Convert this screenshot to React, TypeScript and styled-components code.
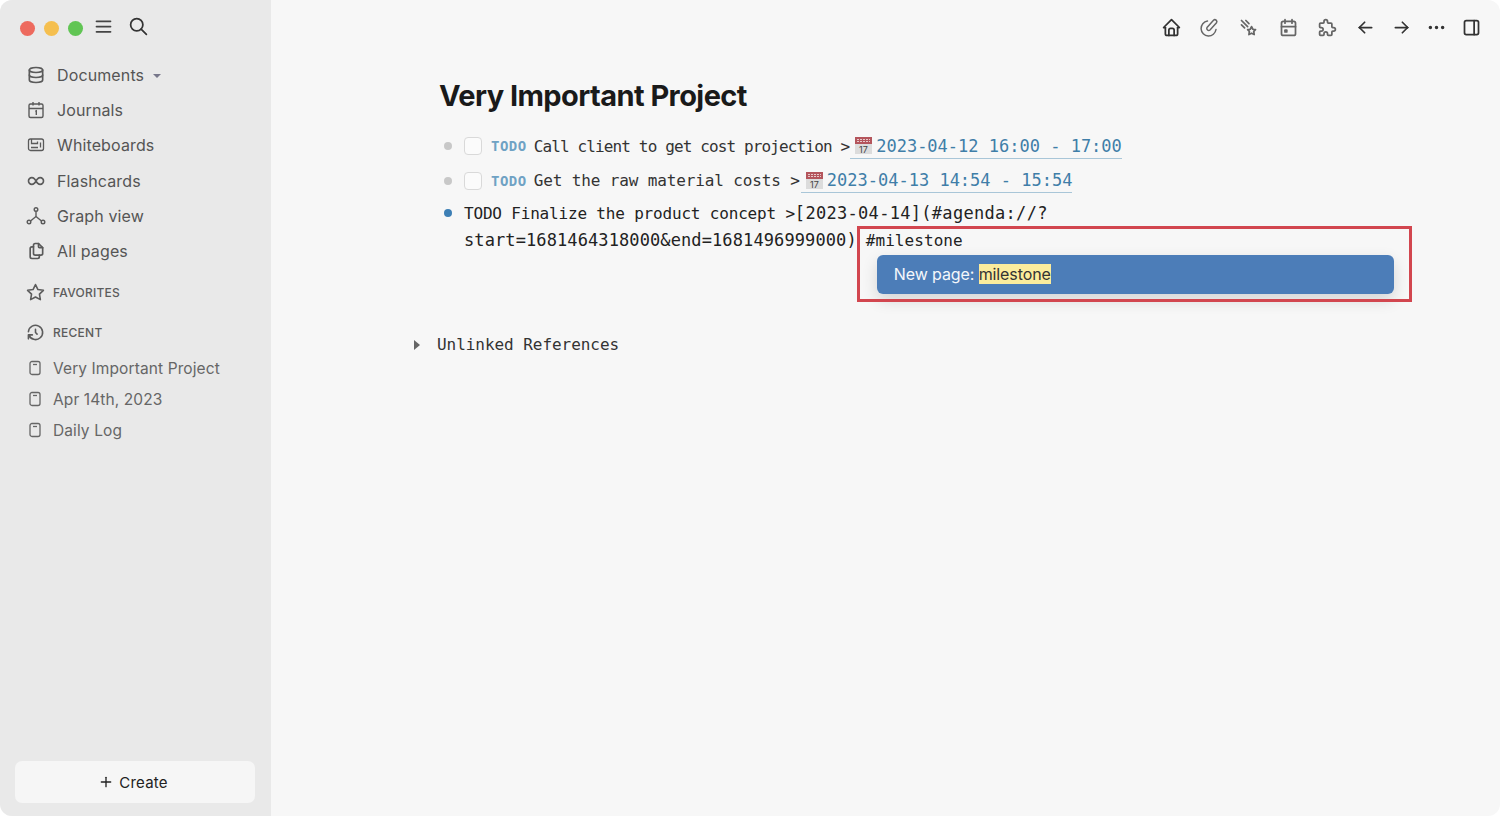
import React from "react";
import styled, { createGlobalStyle } from "styled-components";
import {
  TbDatabase,
  TbInfinity,
  TbFiles,
  TbStar,
  TbHistory,
  TbHome,
  TbComet,
  TbCalendarEvent,
  TbPuzzle,
  TbArrowLeft,
  TbArrowRight,
  TbDots,
  TbLayoutSidebarRight,
  TbMenu2,
  TbSearch,
  TbPlus,
} from "react-icons/tb";

const monoFont = `"DejaVu Sans Mono", "Liberation Mono", monospace`;
const uiFont = `Inter, "Liberation Sans", sans-serif`;

const GraphIcon = () => (
  <svg width="20" height="20" viewBox="0 0 20 20" fill="none" stroke="currentColor" strokeWidth="1.4">
    <circle cx="10" cy="3.5" r="1.8" />
    <circle cx="3" cy="16" r="1.8" />
    <circle cx="17" cy="16" r="1.8" />
    <path d="M10 5.3V10.5M10 10.5L4.5 15M10 10.5L15.5 15" />
  </svg>
);

const PageIcon = () => (
  <svg width="14" height="16" viewBox="0 0 14 16" fill="none" stroke="currentColor" strokeWidth="1.3">
    <rect x="2" y="1.5" width="10" height="13" rx="2" />
    <path d="M5 4.5H9" />
  </svg>
);

const JournalIcon = () => (
  <svg width="20" height="20" viewBox="0 0 20 20" fill="none" stroke="currentColor" strokeWidth="1.4">
    <rect x="3" y="4" width="14" height="13.5" rx="1.5" />
    <path d="M3 8.5H17M7 2V5.5M13 2V5.5M9.3 11.5L10.3 11V15" />
  </svg>
);

const BoardIcon = () => (
  <svg width="18" height="18" viewBox="0 0 18 18" fill="none" stroke="currentColor" strokeWidth="1.3">
    <rect x="1.5" y="3" width="15" height="11.5" rx="2" />
    <path d="M4.5 3V7.5H10.5V5.5M4 11.5H11M13.5 6.5V11.5" />
  </svg>
);

const ClipIcon = () => (
  <svg width="21" height="21" viewBox="0 0 21 21" fill="none" stroke="currentColor" strokeWidth="1.5" strokeLinecap="round">
    <path d="M8.5 4A7.5 7.5 0 1 0 17 12.5" />
    <path d="M8 10.5L14.5 3.2a2 2 0 0 1 3 2.6L11 13a2 2 0 0 1-3-2.5z" />
  </svg>
);

const CalendarEmoji = () => (
  <CalendarSvg width="19" height="19" viewBox="0 0 19 19">
    <rect x="1" y="1" width="17" height="17" fill="#dcdcdc" />
    <rect x="1" y="1" width="17" height="7" fill="#b4555c" />
    <path d="M3 3.5H16M3 5.5H16" stroke="#e7c9cb" strokeWidth="1" strokeDasharray="2 1" />
    <text x="9.5" y="16.5" fontSize="9" textAnchor="middle" fill="#444" fontFamily="Inter, sans-serif">
      17
    </text>
  </CalendarSvg>
);

const navItems = [
  { label: "Journals", icon: <JournalIcon /> },
  { label: "Whiteboards", icon: <BoardIcon /> },
  { label: "Flashcards", icon: <TbInfinity size={20} /> },
  { label: "Graph view", icon: <GraphIcon /> },
  { label: "All pages", icon: <TbFiles size={20} /> },
];

const recentPages = ["Very Important Project", "Apr 14th, 2023", "Daily Log"];

const App = () => {
  return (
    <>
      <GlobalStyle />
      <Window>
        <Sidebar>
          <SideTop>
            <Light color="#ed6a5e" />
            <Light color="#f5bf4f" />
            <Light color="#61c554" />
            <MenuIcon>
              <TbMenu2 size={21} />
            </MenuIcon>
            <SearchIcon>
              <TbSearch size={21} />
            </SearchIcon>
          </SideTop>
          <Nav>
            <NavItem>
              <NavIcon>
                <TbDatabase size={20} />
              </NavIcon>
              Documents
              <Caret />
            </NavItem>
            {navItems.map((item) => (
              <NavItem key={item.label}>
                <NavIcon>{item.icon}</NavIcon>
                {item.label}
              </NavItem>
            ))}
          </Nav>
          <SectionHead $top={14}>
            <TbStar size={19} />
            FAVORITES
          </SectionHead>
          <SectionHead $top={20}>
            <TbHistory size={19} />
            RECENT
          </SectionHead>
          <RecentList>
            {recentPages.map((page) => (
              <RecentItem key={page}>
                <PageIcon />
                {page}
              </RecentItem>
            ))}
          </RecentList>
          <CreateButton>
            <TbPlus size={16} />
            Create
          </CreateButton>
        </Sidebar>
        <Main>
          <TopBar>
            <TopIcon $gap={0} $dark>
              <TbHome size={21} />
            </TopIcon>
            <TopIcon $gap={14}>
              <ClipIcon />
            </TopIcon>
            <TopIcon $gap={15}>
              <TbComet size={21} />
            </TopIcon>
            <TopIcon $gap={16}>
              <TbCalendarEvent size={21} />
            </TopIcon>
            <TopIcon $gap={15}>
              <TbPuzzle size={21} />
            </TopIcon>
            <TopIcon $gap={14} $dark>
              <TbArrowLeft size={21} />
            </TopIcon>
            <TopIcon $gap={12} $dark>
              <TbArrowRight size={21} />
            </TopIcon>
            <TopIcon $gap={11} $dark>
              <TbDots size={21} />
            </TopIcon>
            <TopIcon $gap={11} $dark>
              <TbLayoutSidebarRight size={21} />
            </TopIcon>
          </TopBar>
          <Content>
            <Title>Very Important Project</Title>
            <Row>
              <Bullet />
              <Check />
              <Todo>TODO</Todo>
              <RowText $spacing={-0.87}>Call client to get cost projection &gt;</RowText>
              <DateLink>
                <CalendarEmoji />
                2023-04-12 16:00 - 17:00
              </DateLink>
            </Row>
            <Row>
              <Bullet />
              <Check />
              <Todo>TODO</Todo>
              <RowText $spacing={-0.13}>Get the raw material costs &gt;</RowText>
              <DateLink>
                <CalendarEmoji />
                2023-04-13 14:54 - 15:54
              </DateLink>
            </Row>
            <EditBlock>
              <Bullet $active />
              <EditText>
                <EditLine $spacing={0.3}>
                  <RowText $spacing={-0.18}>TODO Finalize the product concept &gt;</RowText>
                  [2023-04-14](#agenda://?
                </EditLine>
                <EditLine $spacing={0.1}>
                  start=1681464318000&amp;end=1681496999000)
                  <Tag>
                    <RowText $spacing={0.07}>#milestone</RowText>
                    <Popup>
                      <PopupItem>
                        New page: <Mark>milestone</Mark>
                      </PopupItem>
                    </Popup>
                    <Annotation />
                  </Tag>
                </EditLine>
              </EditText>
            </EditBlock>
            <Unlinked>
              <Arrow />
              Unlinked References
            </Unlinked>
          </Content>
        </Main>
      </Window>
    </>
  );
};

export default App;

const GlobalStyle = createGlobalStyle`
  html, body {
    margin: 0;
    padding: 0;
    background: #ffffff;
  }
`;

const Window = styled.div`
  display: flex;
  width: 1500px;
  height: 816px;
  border-radius: 12px;
  overflow: hidden;
  font-family: ${uiFont};
  background: #f7f7f7;
`;

const Sidebar = styled.aside`
  display: flex;
  flex-direction: column;
  width: 271px;
  flex-shrink: 0;
  box-sizing: border-box;
  padding: 0 16px 13px 15px;
  background: #e9e9e9;
`;

const SideTop = styled.div`
  display: flex;
  align-items: center;
  height: 56px;
  padding-left: 5px;
  gap: 9px;
`;

const Light = styled.span<{ color: string }>`
  width: 15px;
  height: 15px;
  border-radius: 50%;
  background: ${(p) => p.color};
`;

const MenuIcon = styled.span`
  display: flex;
  margin-left: 1px;
  margin-top: -3px;
  color: #444;
`;

const SearchIcon = styled.span`
  display: flex;
  margin-left: 5px;
  margin-top: -3px;
  color: #333;
`;

const Nav = styled.nav`
  display: flex;
  flex-direction: column;
  margin-top: 1px;
`;

const NavItem = styled.div`
  display: flex;
  align-items: center;
  height: 35.3px;
  font-size: 16px;
  letter-spacing: 0.12px;
  color: #555;
`;

const NavIcon = styled.span`
  display: flex;
  justify-content: center;
  width: 42px;
  color: #5a5a5a;
`;

const Caret = styled.span`
  width: 0;
  height: 0;
  margin: 2px 0 0 9px;
  border-left: 4.5px solid transparent;
  border-right: 4.5px solid transparent;
  border-top: 4.5px solid #77778a;
`;

const SectionHead = styled.div<{ $top: number }>`
  display: flex;
  align-items: center;
  gap: 8px;
  height: 20px;
  margin-top: ${(p) => p.$top}px;
  padding-left: 11px;
  font-size: 12px;
  font-weight: 500;
  letter-spacing: 0.25px;
  color: #5c5c5c;
`;

const RecentList = styled.div`
  display: flex;
  flex-direction: column;
  margin-top: 10px;
  flex: 1;
`;

const RecentItem = styled.div`
  display: flex;
  align-items: center;
  gap: 11px;
  height: 31px;
  padding-left: 13px;
  font-size: 15.5px;
  letter-spacing: 0.1px;
  color: #666;
`;

const CreateButton = styled.button`
  display: flex;
  align-items: center;
  justify-content: center;
  gap: 5px;
  height: 42px;
  padding: 0 4px 0 0;
  border: 0;
  border-radius: 7px;
  background: #f6f6f6;
  font-family: ${uiFont};
  font-size: 15px;
  letter-spacing: 0.2px;
  color: #222;
`;

const Main = styled.main`
  flex: 1;
  display: flex;
  flex-direction: column;
  min-width: 0;
`;

const TopBar = styled.div`
  display: flex;
  justify-content: flex-end;
  align-items: center;
  height: 54px;
  padding-right: 17px;
`;

const TopIcon = styled.span<{ $gap: number; $dark?: boolean }>`
  display: flex;
  width: 24px;
  margin-left: ${(p) => p.$gap}px;
  justify-content: center;
  color: ${(p) => (p.$dark ? "#333" : "#666")};
`;

const Content = styled.div`
  display: flex;
  flex-direction: column;
  padding-left: 169px;
`;

const Title = styled.h1`
  margin: 22px 0 13px -1px;
  height: 40px;
  line-height: 40px;
  font-size: 29px;
  font-weight: 700;
  letter-spacing: -0.57px;
  color: #1a1a1a;
`;

const Row = styled.div`
  display: flex;
  align-items: center;
  height: 34.5px;
  font-family: ${monoFont};
  font-size: 17px;
  color: #333;
`;

const Bullet = styled.span<{ $active?: boolean }>`
  flex-shrink: 0;
  width: 8px;
  height: 8px;
  margin: 0 12px 0 4px;
  border-radius: 50%;
  background: ${(p) => (p.$active ? "#3d7fb5" : "#c8c8c8")};
`;

const Check = styled.span`
  width: 16px;
  height: 16px;
  border: 1px solid #d9d9d9;
  border-radius: 4px;
  background: #fbfbfb;
  margin-right: 9px;
`;

const Todo = styled.span`
  font-size: 14px;
  font-weight: 700;
  letter-spacing: 0.5px;
  color: #6fa2c4;
  margin-right: 7px;
`;

const RowText = styled.span<{ $spacing: number }>`
  white-space: nowrap;
  font-size: 16px;
  letter-spacing: ${(p) => p.$spacing}px;
`;

const DateLink = styled.span`
  display: inline-flex;
  align-items: center;
  height: 24px;
  margin-left: 1px;
  padding-left: 4px;
  color: #3f7ea8;
  border-bottom: 1px solid #a9c6d8;
  white-space: nowrap;
`;

const CalendarSvg = styled.svg`
  margin-right: 3px;
`;

const EditBlock = styled.div`
  display: flex;
  align-items: flex-start;
  margin-top: 2px;
  font-family: ${monoFont};
  font-size: 17px;
  color: #222;

  ${Bullet} {
    margin-top: 9px;
  }
`;

const EditText = styled.div`
  display: flex;
  flex-direction: column;
  line-height: 26px;
`;

const EditLine = styled.div<{ $spacing: number }>`
  white-space: nowrap;
  letter-spacing: ${(p) => p.$spacing}px;
`;

const Tag = styled.span`
  position: relative;
  margin-left: 9px;
`;

const Popup = styled.div`
  position: absolute;
  left: 11px;
  top: 25px;
  width: 517px;
  box-shadow: 0 6px 16px rgba(0, 0, 0, 0.14);
  border-radius: 6px;
`;

const PopupItem = styled.div`
  box-sizing: border-box;
  height: 39px;
  padding-left: 17px;
  line-height: 39px;
  border-radius: 6px;
  background: #4c7db8;
  color: #f4f7fb;
  font-family: ${uiFont};
  font-size: 16px;
  letter-spacing: -0.1px;
  white-space: pre;
`;

const Mark = styled.mark`
  background: #fbec9d;
  color: #333;
`;

const Annotation = styled.div`
  position: absolute;
  left: -9px;
  top: -4px;
  box-sizing: border-box;
  width: 555px;
  height: 76px;
  border: 3px solid #d2464f;
  pointer-events: none;
`;

const Unlinked = styled.div`
  display: flex;
  align-items: center;
  margin: 81px 0 0 -26px;
  font-family: ${monoFont};
  font-size: 16px;
  letter-spacing: -0.05px;
  color: #333;
`;

const Arrow = styled.span`
  width: 0;
  height: 0;
  margin-right: 17px;
  border-top: 5px solid transparent;
  border-bottom: 5px solid transparent;
  border-left: 6px solid #666;
`;
